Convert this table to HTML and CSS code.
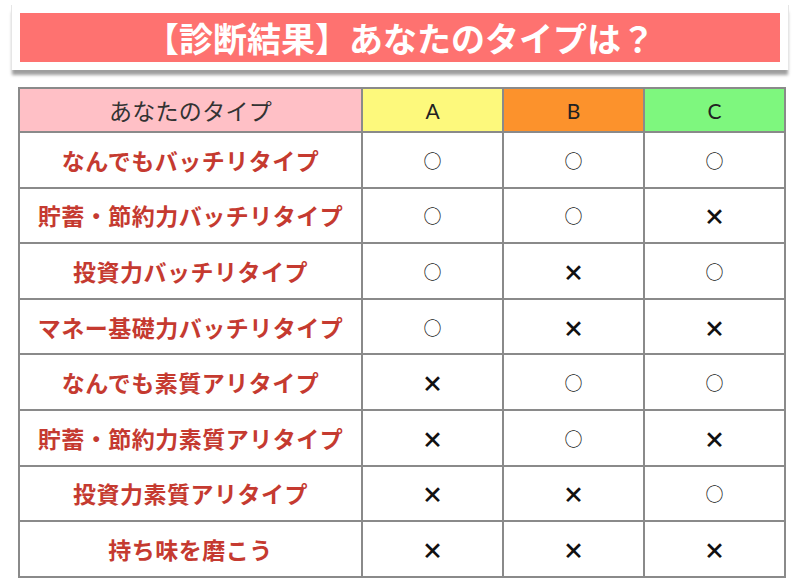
FILE: index.html
```html
<!DOCTYPE html>
<html lang="ja">
<head>
<meta charset="utf-8">
<link rel="stylesheet" href="styles.css">
</head>
<body>
<div class="banner">
  <h1 class="banner-title">【診断結果】あなたのタイプは？</h1>
</div>
<table class="result">
  <colgroup>
    <col class="c-type"><col class="c-abc"><col class="c-abc"><col class="c-abc">
  </colgroup>
  <thead>
    <tr>
      <th class="h-type">あなたのタイプ</th>
      <th class="h-a">A</th>
      <th class="h-b">B</th>
      <th class="h-c">C</th>
    </tr>
  </thead>
  <tbody>
    <tr><td class="name">なんでもバッチリタイプ</td><td class="o">○</td><td class="o">○</td><td class="o">○</td></tr>
    <tr><td class="name">貯蓄・節約力バッチリタイプ</td><td class="o">○</td><td class="o">○</td><td class="x">×</td></tr>
    <tr><td class="name">投資力バッチリタイプ</td><td class="o">○</td><td class="x">×</td><td class="o">○</td></tr>
    <tr><td class="name">マネー基礎力バッチリタイプ</td><td class="o">○</td><td class="x">×</td><td class="x">×</td></tr>
    <tr><td class="name">なんでも素質アリタイプ</td><td class="x">×</td><td class="o">○</td><td class="o">○</td></tr>
    <tr><td class="name">貯蓄・節約力素質アリタイプ</td><td class="x">×</td><td class="o">○</td><td class="x">×</td></tr>
    <tr><td class="name">投資力素質アリタイプ</td><td class="x">×</td><td class="x">×</td><td class="o">○</td></tr>
    <tr><td class="name">持ち味を磨こう</td><td class="x">×</td><td class="x">×</td><td class="x">×</td></tr>
  </tbody>
</table>
</body>
</html>
```
FILE: styles.css
```css
html, body {
  margin: 0;
  padding: 0;
  background: #ffffff;
}
body {
  font-family: "Noto Sans CJK JP", "Noto Sans", sans-serif;
  width: 800px;
  height: 585px;
  overflow: hidden;
}
.banner {
  margin: 5px 11px 0 11px;
  padding: 8px 8px 8px 8px;
  background: #ffffff;
  border-left: 1px solid #e6e6e6;
  border-right: 1px solid #e6e6e6;
  box-shadow: 0 6px 3px -1px rgba(0,0,0,0.38);
}
.banner-title {
  margin: 0;
  height: 49px;
  background: #fe7270;
  color: #ffffff;
  font-size: 34px;
  font-weight: 700;
  line-height: 49px;
  text-align: center;
}
.result {
  margin: 17px 0 0 18px;
  width: 767px;
  border-collapse: collapse;
  table-layout: fixed;
  border: 2px solid #8a8a8a;
}
.c-type { width: 343px; }
.c-abc { width: 141px; }
.result th, .result td {
  border: 2px solid #8a8a8a;
  text-align: center;
  padding: 0;
}
.result thead th {
  height: 42px;
  font-weight: 400;
  color: #222222;
}
.h-type {
  background: #ffc0c6;
  font-size: 23px;
  color: #333333 !important;
  letter-spacing: 0.3px;
}
.h-a, .h-b, .h-c {
  font-family: "Lato", "Noto Sans", sans-serif;
  font-size: 21px;
}
.h-a { background: #fdf97c; }
.h-b { background: #fc922c; }
.h-c { background: #7ef77e; }
.result tbody td {
  height: 53.6px;
}
.name {
  color: #c53a30;
  font-size: 23px;
  font-weight: 700;
  letter-spacing: 0.5px;
}
.o {
  font-size: 18px;
  font-weight: 500;
  color: #222222;
}
.x {
  font-size: 22px;
  font-weight: 900;
  color: #111111;
}
```
